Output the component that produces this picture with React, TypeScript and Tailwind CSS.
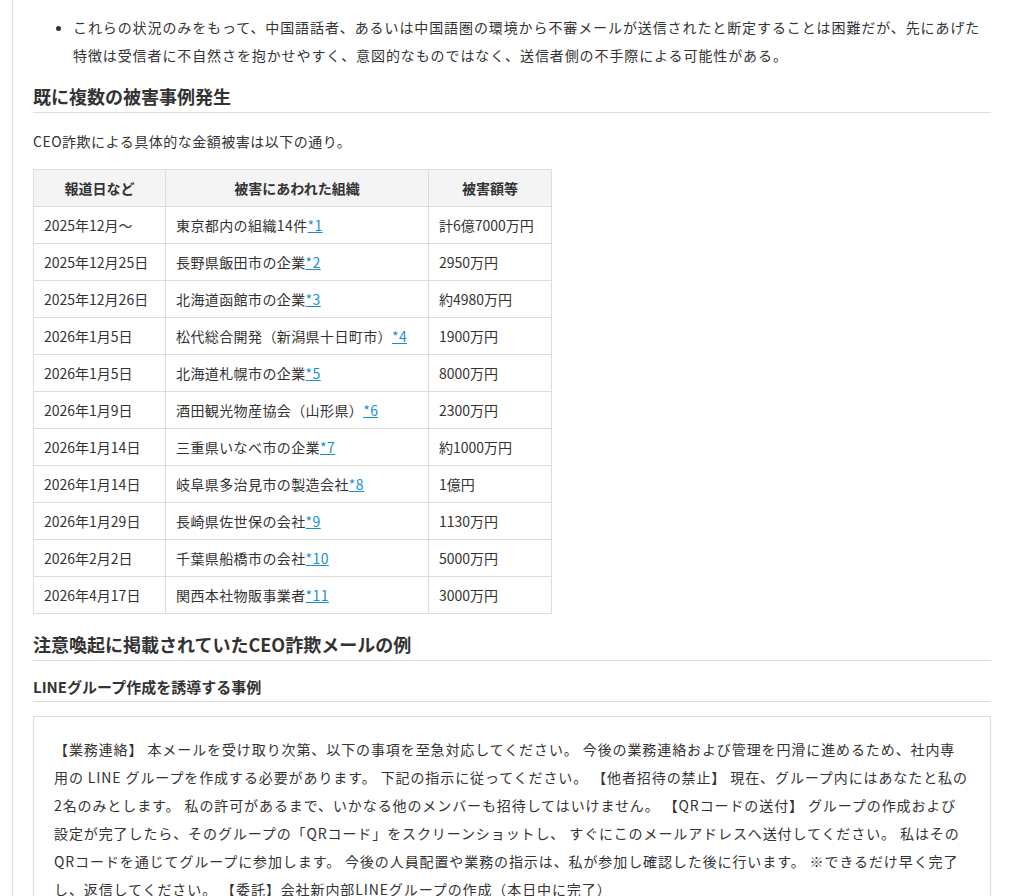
const rows: [string, string, string, string][] = [
  ["2025年12月～", "東京都内の組織14件", "*1", "計6億7000万円"],
  ["2025年12月25日", "長野県飯田市の企業", "*2", "2950万円"],
  ["2025年12月26日", "北海道函館市の企業", "*3", "約4980万円"],
  ["2026年1月5日", "松代総合開発（新潟県十日町市）", "*4", "1900万円"],
  ["2026年1月5日", "北海道札幌市の企業", "*5", "8000万円"],
  ["2026年1月9日", "酒田観光物産協会（山形県）", "*6", "2300万円"],
  ["2026年1月14日", "三重県いなべ市の企業", "*7", "約1000万円"],
  ["2026年1月14日", "岐阜県多治見市の製造会社", "*8", "1億円"],
  ["2026年1月29日", "長崎県佐世保の会社", "*9", "1130万円"],
  ["2026年2月2日", "千葉県船橋市の会社", "*10", "5000万円"],
  ["2026年4月17日", "関西本社物販事業者", "*11", "3000万円"],
];

export default function App() {
  return (
    <div className="w-[1011px] h-[896px] overflow-hidden bg-white text-[#333] text-[14px]" style={{ fontFamily: '"Noto Sans CJK JP", "Noto Sans", sans-serif' }}>
      <div className="ml-[12px] border-l border-[#ddd] h-full pl-[20px] pr-[20px]">
        <ul className="list-disc pl-[40px] pt-[13px] leading-[28px] text-[14px] tracking-[0.9px]">
          <li>これらの状況のみをもって、中国語話者、あるいは中国語圏の環境から不審メールが送信されたと断定することは困難だが、先にあげた特徴は受信者に不自然さを抱かせやすく、意図的なものではなく、送信者側の不手際による可能性がある。</li>
        </ul>
        <h2 className="mt-[13px] text-[18px] font-bold leading-[28px] pb-[2px] border-b border-[#ddd]">既に複数の被害事例発生</h2>
        <p className="mt-[14px] leading-[28px] tracking-[0.5px]">CEO詐欺による具体的な金額被害は以下の通り。</p>
        <table className="mt-[14px] border-collapse text-[14px]">
          <thead>
            <tr className="bg-[#f4f4f4] h-[37px]">
              <th className="border border-[#ddd] w-[132px] font-bold">報道日など</th>
              <th className="border border-[#ddd] w-[263px] font-bold">被害にあわれた組織</th>
              <th className="border border-[#ddd] w-[123px] font-bold">被害額等</th>
            </tr>
          </thead>
          <tbody>
            {rows.map((r, i) => (
              <tr key={i} className="h-[37px]">
                <td className="border border-[#ddd] px-[10px]">{r[0]}</td>
                <td className="border border-[#ddd] px-[10px] whitespace-nowrap tracking-[0.4px]">{r[1]}<span className="text-[#1a8fd0] underline">{r[2]}</span></td>
                <td className="border border-[#ddd] px-[10px] whitespace-nowrap">{r[3]}</td>
              </tr>
            ))}
          </tbody>
        </table>
        <h2 className="mt-[16px] text-[18px] font-bold leading-[28px] pb-[2px] border-b border-[#ddd]">注意喚起に掲載されていたCEO詐欺メールの例</h2>
        <h3 className="mt-[14px] text-[15px] font-bold leading-[24px] pb-[2px] border-b border-[#ddd]">LINEグループ作成を誘導する事例</h3>
        <div className="mt-[14px] border border-[#ddd] px-[20px] pt-[18px] pb-[20px] leading-[28px] tracking-[0.9px]">
          【業務連絡】 本メールを受け取り次第、以下の事項を至急対応してください。 今後の業務連絡および管理を円滑に進めるため、社内専用の LINE グループを作成する必要があります。 下記の指示に従ってください。 【他者招待の禁止】 現在、グループ内にはあなたと私の2名のみとします。 私の許可があるまで、いかなる他のメンバーも招待してはいけません。 【QRコードの送付】 グループの作成および設定が完了したら、そのグループの「QRコード」をスクリーンショットし、 すぐにこのメールアドレスへ送付してください。 私はその QRコードを通じてグループに参加します。 今後の人員配置や業務の指示は、私が参加し確認した後に行います。 ※できるだけ早く完了し、返信してください。 【委託】会社新内部LINEグループの作成（本日中に完了）
        </div>
      </div>
    </div>
  );
}
